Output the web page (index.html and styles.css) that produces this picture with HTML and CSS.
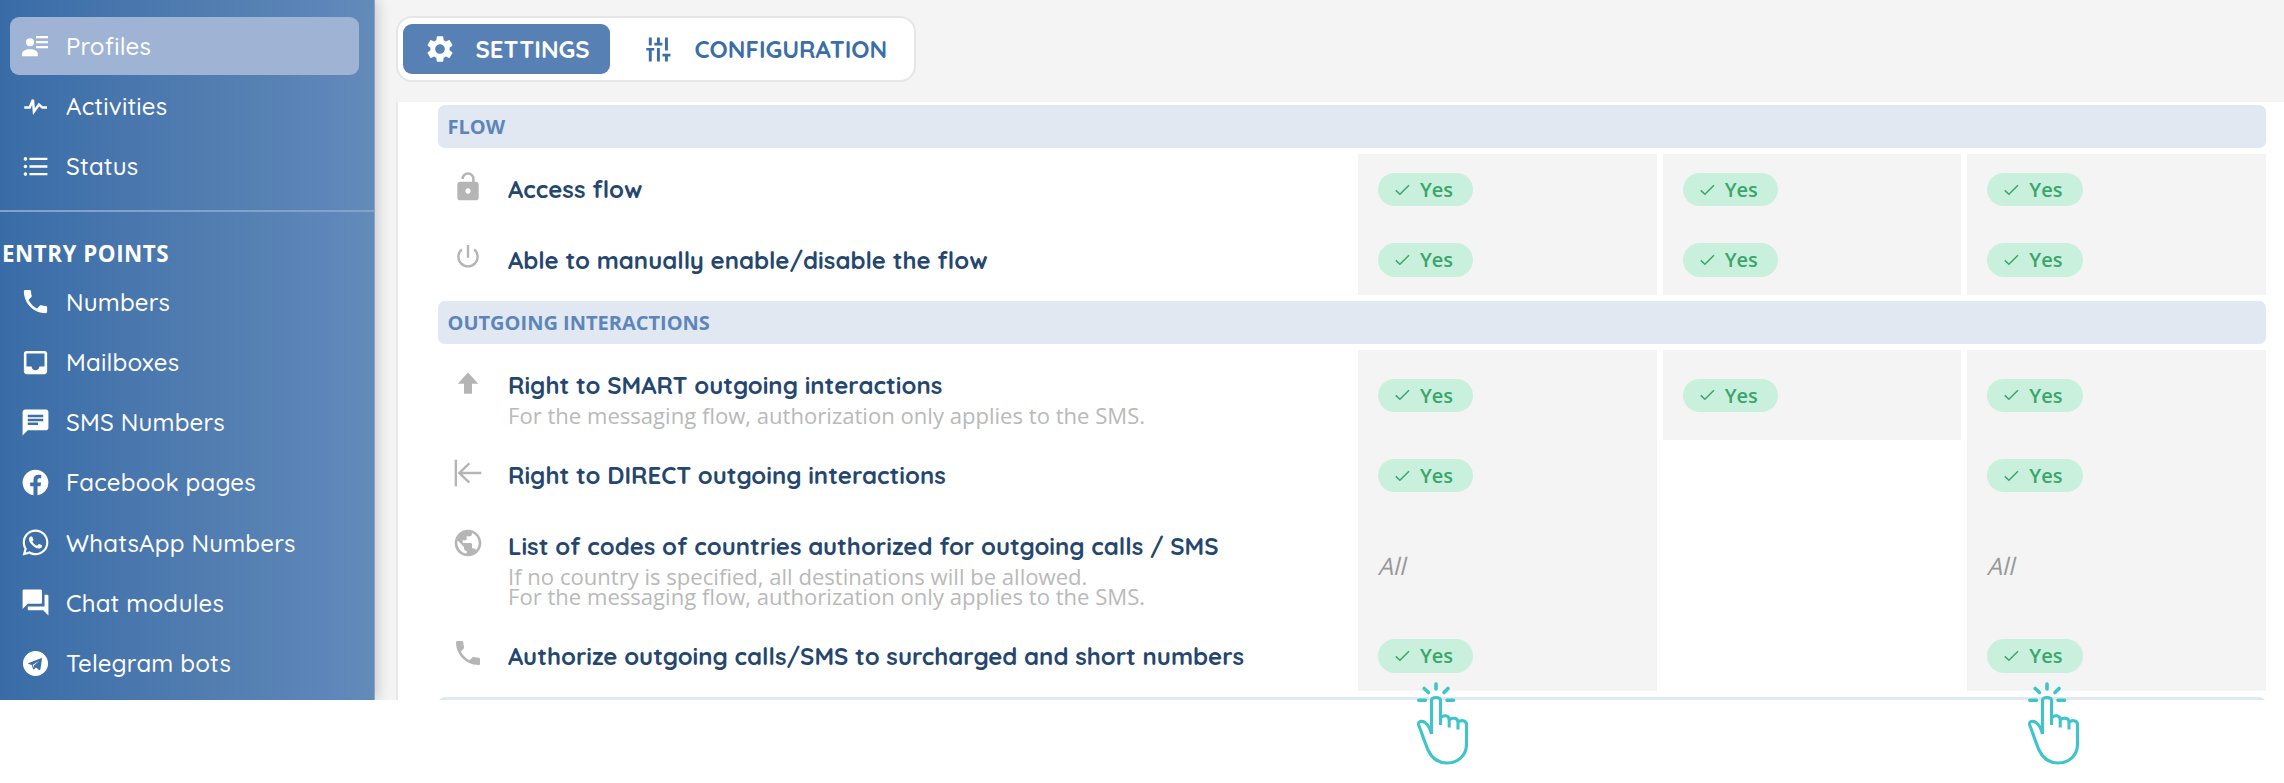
FILE: index.html
```html
<!DOCTYPE html>
<html lang="en">
<head>
<meta charset="utf-8">
<title>Profiles</title>
<link rel="stylesheet" href="styles.css">
</head>
<body>
<svg class="defs" width="0" height="0" aria-hidden="true">
  <symbol id="check" viewBox="0 0 15 12"><path d="M.8 6.400 4.900 10.300 14 1.200" fill="none" stroke="currentColor" stroke-width="1.500"/></symbol>
  <symbol id="phone" viewBox="0 0 24 24"><path d="M6.620 10.790c1.440 2.830 3.760 5.140 6.590 6.590l2.200-2.200c.27-.27.67-.36 1.020-.24 1.120.37 2.330.57 3.570.57.55 0 1 .45 1 1V20c0 .55-.45 1-1 1-9.390 0-17-7.610-17-17 0-.55.45-1 1-1h3.500c.55 0 1 .45 1 1 0 1.250.2 2.450.57 3.570.11.35.03.74-.25 1.020l-2.200 2.200z"/></symbol>
  <symbol id="tap" viewBox="0 0 52 84">
    <g fill="none" stroke="#3fc4cc" stroke-width="3.100" stroke-linejoin="round">
      <path d="M15.500 54V20.500C15.500 16.500 24.500 16.500 24.500 20.500V45M24.500 38C27 34.500 33.200 35 33.200 40V47.500M33.200 40.500C35 37 42 37.500 42 42V49.500M42 42.500C44 39.500 50.500 40 50.500 44.500V64C50.500 75.500 42 83 31 83C22 83 15.500 77.500 12 70C8.500 61.500 5.500 52.500 2.700 45C1.500 41 6 40.500 9 42.500C12 44.500 14 48.500 15.500 54"/>
      <path d="M20 4V9M8.200 8.500 12.400 12.500M32 8.500 28 12.500M2.800 20.300H9.500M31 20.300H37.500" stroke-width="3.600" stroke-linecap="round"/>
    </g>
  </symbol>
</svg>

<div class="app">
  <nav class="sidebar">
    <a class="item active"><svg class="ico" viewBox="0 0 24 24"><circle cx="7.400" cy="8.500" r="3.700"/><path d="M0 21.400v-1.800c0-3 3-4.600 7.300-4.600s7.300 1.600 7.300 4.600v1.800zM13 2.800h11v2H13zM13 7.400h11v2H13zM13 12h11v2H13z"/></svg><span>Profiles</span></a>
    <a class="item"><svg class="ico" viewBox="0 0 24 24"><path d="M3.300 12.700h4.200L10 6.800l.8 9.200 3.900-5.500 2.600 2.200h3.600" fill="none" stroke="currentColor" stroke-width="1.900"/></svg><span>Activities</span></a>
    <a class="item"><svg class="ico" viewBox="0 0 24 24"><path d="M7.300 5.200h13.900V7H7.300zM7.300 11.100h13.900v1.800H7.300zM7.300 17h13.900v1.800H7.300z"/><circle cx="4.200" cy="6.100" r="1.400"/><circle cx="4.200" cy="12" r="1.400"/><circle cx="4.200" cy="17.900" r="1.400"/></svg><span>Status</span></a>
    <div class="divider"></div>
    <h2 class="heading">ENTRY POINTS</h2>
    <a class="item"><svg class="ico"><use href="#phone"/></svg><span>Numbers</span></a>
    <a class="item"><svg class="ico" viewBox="0 0 24 24"><path d="M19 3H5c-1.100 0-2 .9-2 2v14c0 1.100.9 2 2 2h14c1.100 0 2-.9 2-2V5c0-1.100-.9-2-2-2zm0 12h-4c0 1.660-1.350 3-3 3s-3-1.340-3-3H5V5h14z"/></svg><span>Mailboxes</span></a>
    <a class="item"><svg class="ico" viewBox="0 0 24 24"><path d="M20 2H4c-1.100 0-1.990.9-1.990 2L2 22l4-4h14c1.100 0 2-.9 2-2V4c0-1.100-.9-2-2-2zM6 9h12v2H6zm8 5H6v-2h8zm4-6H6V6h12z"/></svg><span>SMS Numbers</span></a>
    <a class="item"><svg class="ico" viewBox="0 0 24 24"><path d="M12 2.040C6.500 2.040 2 6.530 2 12.060C2 17.060 5.660 21.210 10.440 21.960V14.960H7.900V12.060H10.440V9.850C10.440 7.340 11.930 5.960 14.220 5.960C15.310 5.960 16.450 6.150 16.450 6.150V8.620H15.190C13.950 8.620 13.560 9.390 13.560 10.180V12.060H16.340L15.890 14.960H13.560V21.960A10 10 0 0 0 22 12.060C22 6.530 17.500 2.040 12 2.040Z"/></svg><span>Facebook pages</span></a>
    <a class="item"><svg class="ico" viewBox="0 0 24 24"><path d="M12.040 2C6.580 2 2.130 6.450 2.130 11.910C2.130 13.660 2.590 15.360 3.450 16.860L2.050 22L7.300 20.620C8.750 21.410 10.380 21.830 12.040 21.830C17.500 21.830 21.950 17.380 21.950 11.920C21.950 9.270 20.920 6.780 19.050 4.910C17.180 3.030 14.690 2 12.040 2M12.050 3.670C14.250 3.670 16.310 4.530 17.870 6.090C19.420 7.650 20.280 9.720 20.280 11.920C20.280 16.460 16.580 20.150 12.040 20.150C10.560 20.150 9.110 19.760 7.850 19L7.550 18.830L4.430 19.650L5.260 16.610L5.060 16.290C4.240 15 3.800 13.470 3.800 11.910C3.810 7.370 7.500 3.670 12.050 3.670M8.530 7.330C8.370 7.330 8.100 7.390 7.870 7.640C7.650 7.890 7 8.500 7 9.710C7 10.930 7.890 12.100 8 12.270C8.140 12.440 9.760 14.940 12.250 16C12.840 16.270 13.300 16.420 13.660 16.530C14.250 16.720 14.790 16.690 15.220 16.630C15.700 16.560 16.680 16.030 16.890 15.450C17.100 14.870 17.100 14.380 17.040 14.270C16.970 14.170 16.810 14.110 16.560 14C16.310 13.860 15.090 13.260 14.870 13.180C14.640 13.100 14.500 13.060 14.310 13.300C14.150 13.550 13.670 14.110 13.530 14.270C13.380 14.440 13.240 14.460 13 14.340C12.740 14.210 11.940 13.950 11 13.110C10.260 12.450 9.770 11.640 9.620 11.390C9.500 11.150 9.610 11 9.730 10.890C9.840 10.780 10 10.600 10.100 10.450C10.230 10.310 10.270 10.200 10.350 10.040C10.430 9.870 10.390 9.730 10.330 9.610C10.270 9.500 9.770 8.260 9.560 7.770C9.360 7.290 9.160 7.350 9 7.340C8.860 7.330 8.700 7.330 8.530 7.330Z"/></svg><span>WhatsApp Numbers</span></a>
    <a class="item"><svg class="ico" viewBox="0 0 24 24"><path d="M21 6h-2v9H6v2c0 .55.45 1 1 1h11l4 4V7c0-.55-.45-1-1-1zm-4 6V3c0-.55-.45-1-1-1H3c-.55 0-1 .45-1 1v14l4-4h10c.55 0 1-.45 1-1z"/></svg><span>Chat modules</span></a>
    <a class="item"><svg class="ico" viewBox="0 0 24 24"><path fill-rule="evenodd" d="M12 2.300a9.700 9.700 0 1 0 0 19.400 9.700 9.700 0 1 0 0-19.400zM16.300 7.900 6.700 11.600c-.5.200-.5.600 0 .8l2.400.8 1 3c.2.500.5.500.8.200l1.400-1.300 2.500 1.900c.5.300.9.100 1-.5l1.200-8c.1-.5-.2-.8-.7-.6zM14.900 9.900 10.800 13.600l-.2 1.700-.8-2.200z"/></svg><span>Telegram bots</span></a>
  </nav>

  <main class="main">
    <div class="tabs">
      <a class="tab on"><svg class="tab-ico" viewBox="0 0 24 24"><path d="M19.140 12.940c.04-.3.060-.61.060-.94 0-.32-.020-.64-.070-.94l2.030-1.580c.18-.14.23-.41.120-.61l-1.920-3.320c-.12-.22-.37-.29-.59-.22l-2.390.96c-.5-.38-1.030-.7-1.620-.94l-.36-2.540c-.040-.24-.24-.41-.48-.41h-3.840c-.24 0-.43.17-.47.410l-.36 2.540c-.59.24-1.130.57-1.620.94l-2.390-.96c-.22-.080-.47 0-.59.220L2.740 8.870c-.12.21-.080.47.120.610l2.030 1.580c-.050.3-.090.630-.090.940s.020.640.070.940l-2.030 1.580c-.18.14-.23.41-.12.610l1.920 3.320c.12.220.370.290.590.220l2.390-.96c.5.380 1.030.7 1.620.940l.36 2.540c.050.240.240.410.480.410h3.840c.24 0 .44-.17.470-.41l.36-2.540c.59-.24 1.130-.56 1.620-.94l2.390.96c.22.080.470 0 .590-.22l1.920-3.320c.12-.22.070-.47-.12-.61l-2.010-1.580zM12 15.600c-1.980 0-3.600-1.620-3.600-3.600s1.620-3.600 3.600-3.600 3.600 1.620 3.600 3.600-1.620 3.600-3.600 3.600z"/></svg><span>SETTINGS</span></a>
      <a class="tab"><svg class="tab-ico tune" viewBox="0 0 24 24"><path d="M2.600 1h2.700v7.300H2.600zM.3 10.600h7.300v2.300H5.300V23H2.600V12.900H.3zM10.100 1h2.700v4.800h2.300v2.500H7.700V5.800h2.400zM10.100 10.600h2.700V23h-2.700zM17.500 1h2.700v11.900h-2.700zM15.200 16h7.400v2.400h-2.400V23h-2.700v-4.600h-2.300z"/></svg><span>CONFIGURATION</span></a>
    </div>

    <section class="panel">
      <h3 class="group">FLOW</h3>
      <div class="row">
        <div class="label"><svg class="row-ico" viewBox="0 0 24 24"><path fill-rule="evenodd" d="M18 8h-1V6c0-2.760-2.240-5-5-5S7 3.240 7 6h1.900c0-1.710 1.390-3.100 3.100-3.100s3.100 1.390 3.100 3.100v2H6c-1.100 0-2 .9-2 2v10c0 1.100.9 2 2 2h12c1.100 0 2-.9 2-2V10c0-1.100-.9-2-2-2zm-6 9c-1.100 0-2-.9-2-2s.9-2 2-2 2 .9 2 2-.9 2-2 2z"/></svg><div><p class="title">Access flow</p></div></div>
        <div class="cell"><span class="pill"><svg><use href="#check"/></svg>Yes</span></div><div class="cell"><span class="pill"><svg><use href="#check"/></svg>Yes</span></div><div class="cell"><span class="pill"><svg><use href="#check"/></svg>Yes</span></div>
      </div>
      <div class="row">
        <div class="label"><svg class="row-ico" viewBox="0 0 24 24"><path d="M12 3v9.500M7.400 6.300a7.200 7.200 0 1 0 9.200 0" fill="none" stroke="currentColor" stroke-width="1.800"/></svg><div><p class="title">Able to manually enable/disable the flow</p></div></div>
        <div class="cell"><span class="pill"><svg><use href="#check"/></svg>Yes</span></div><div class="cell"><span class="pill"><svg><use href="#check"/></svg>Yes</span></div><div class="cell"><span class="pill"><svg><use href="#check"/></svg>Yes</span></div>
      </div>
      <h3 class="group spaced">OUTGOING INTERACTIONS</h3>
      <div class="row medium">
        <div class="label"><svg class="row-ico" viewBox="0 0 24 24"><path d="M12 4.200 19.700 12.500H15V20H9v-7.500H4.300z"/></svg><div><p class="title">Right to SMART outgoing interactions</p><p class="note">For the messaging flow, authorization only applies to the SMS.</p></div></div>
        <div class="cell"><span class="pill"><svg><use href="#check"/></svg>Yes</span></div><div class="cell"><span class="pill"><svg><use href="#check"/></svg>Yes</span></div><div class="cell"><span class="pill"><svg><use href="#check"/></svg>Yes</span></div>
      </div>
      <div class="row">
        <div class="label"><svg class="row-ico" viewBox="0 0 24 24"><path d="M2.900 2v20M22 12H5.500M13 4.800 5.500 12 13 19.200" fill="none" stroke="currentColor" stroke-width="1.800"/></svg><div><p class="title">Right to DIRECT outgoing interactions</p></div></div>
        <div class="cell"><span class="pill"><svg><use href="#check"/></svg>Yes</span></div><div class="cell none"></div><div class="cell"><span class="pill"><svg><use href="#check"/></svg>Yes</span></div>
      </div>
      <div class="row tall">
        <div class="label"><svg class="row-ico" viewBox="0 0 24 24"><path d="M12 2C6.480 2 2 6.480 2 12s4.480 10 10 10 10-4.480 10-10S17.520 2 12 2zm-1 17.930c-3.950-.49-7-3.850-7-7.930 0-.62.080-1.210.21-1.790L9 15v1c0 1.100.9 2 2 2v1.930zm6.900-2.540c-.26-.81-1-1.390-1.900-1.390h-1v-3c0-.55-.45-1-1-1H8v-2h2c.55 0 1-.45 1-1V7h2c1.100 0 2-.9 2-2v-.41c2.930 1.190 5 4.060 5 7.410 0 2.080-.8 3.970-2.100 5.390z"/></svg><div><p class="title">List of codes of countries authorized for outgoing calls / SMS</p><p class="note">If no country is specified, all destinations will be allowed.<br>For the messaging flow, authorization only applies to the SMS.</p></div></div>
        <div class="cell"><span class="all">All</span></div><div class="cell none"></div><div class="cell"><span class="all">All</span></div>
      </div>
      <div class="row">
        <div class="label"><svg class="row-ico"><use href="#phone"/></svg><div><p class="title">Authorize outgoing calls/SMS to surcharged and short numbers</p></div></div>
        <div class="cell"><span class="pill"><svg><use href="#check"/></svg>Yes</span></div><div class="cell none"></div><div class="cell"><span class="pill"><svg><use href="#check"/></svg>Yes</span></div>
      </div>
      <div class="group spaced"></div>
    </section>
  </main>
</div>
<svg class="tap first"><use href="#tap"/></svg>
<svg class="tap second"><use href="#tap"/></svg>
</body>
</html>
```
FILE: styles.css
```css
* { box-sizing: border-box; }
body { margin: 0; background: #fff; font-family: "Open Sans", sans-serif; position: relative; height: 783px; overflow: hidden; }
.defs { position: absolute; }
p, h2, h3 { margin: 0; }
svg { fill: currentColor; flex: none; }

.app { display: flex; height: 700px; overflow: hidden; background: #f4f4f4; }

.sidebar { width: 375px; flex: none; padding-top: 17px; color: #fff; background: linear-gradient(90deg, #396ca7 0%, #4b78ae 40%, #5681b3 70%, #5e86ba 88%, #628bb8 100%); border-right: 1px solid #86a6cf; box-shadow: 1px 0 14px rgba(0, 0, 0, .22); }
.item { display: flex; align-items: center; height: 58px; margin: 0 15px 2.200px 10px; padding-left: 9.500px; border-radius: 9px; font-family: Quicksand, Lato, sans-serif; font-size: 24px; line-height: 30px; font-weight: 500; letter-spacing: .2px; white-space: nowrap; }
.item.active { background: #9fb4d4; }
.ico { width: 31px; height: 31px; margin-right: 15.500px; }
.item.active .ico { width: 26px; height: 26px; margin: 0 18px 0 2.500px; }
.divider { height: 2px; margin-top: 15px; background: #84a1c8; }
.heading { padding: 22px 0 0 2px; height: 60.500px; font-size: 22.400px; line-height: 40px; font-weight: 700; letter-spacing: .5px; }

.main { flex: 1; min-width: 0; padding: 16px 0 0 21px; display: flex; flex-direction: column; }
.tabs { display: flex; width: 520px; height: 66px; padding: 6px 6px 6px 5px; background: #fff; border: 2px solid #e6e6e6; border-radius: 16px; flex: none; font-family: Quicksand, Lato, sans-serif; font-size: 24px; font-weight: 700; color: #3b6da8; }
.tab { display: flex; align-items: center; height: 50px; padding-left: 21px; border-radius: 9px; }
.tab.on { width: 207px; background: #5781b4; color: #fff; }
.tab-ico { width: 32px; height: 32px; margin-right: 19.500px; }
.tab-ico.tune { width: 26px; height: 29px; margin: 0 22.500px 0 15px; }

.panel { flex: 1; margin-top: 20px; padding: 3px 18px 0 39.500px; background: #fff; border-left: 2px solid #e8e8e8; }
.group { height: 43.400px; border-radius: 7px; background: #e1e8f2; margin-bottom: 6px; padding-left: 10px; font-size: 20px; line-height: 43px; font-weight: 700; color: #5c86b9; }
.group.spaced { margin-top: 6px; }
.row { display: grid; grid-template-columns: minmax(0, 1fr) repeat(3, 298.700px); column-gap: 6px; height: 70.300px; }
.row.medium { height: 90px; }
.row.tall { height: 110px; }
.label { display: flex; padding: 20px 0 0 14px; color: #b5b5b5; white-space: nowrap; }
.row-ico { width: 32px; height: 32px; margin: -3.500px 24.500px 0 0; }
.title { font-family: Quicksand, Lato, sans-serif; font-size: 23.960px; line-height: 31px; font-weight: 700; color: #25476f; }
.note { font-size: 22.080px; line-height: 20px; margin-top: 4px; color: #b9b9b9; }
.cell { background: #f4f4f4; padding-left: 20px; display: flex; align-items: center; }
.cell.none { background: transparent; }
.all { font-size: 24px; color: #999; transform: skewX(-14deg); transform-origin: left 75%; }
.pill { display: flex; align-items: center; width: 95.500px; height: 33.500px; padding-left: 17px; border-radius: 17px; background: #c9f0dc; color: #3ba56d; font-size: 20px; font-weight: 600; }
.pill svg { width: 15px; height: 12px; margin-right: 10px; }

.tap { position: absolute; top: 679px; width: 52px; height: 86px; }
.tap.first { left: 1416px; }
.tap.second { left: 2026.500px; }
```
